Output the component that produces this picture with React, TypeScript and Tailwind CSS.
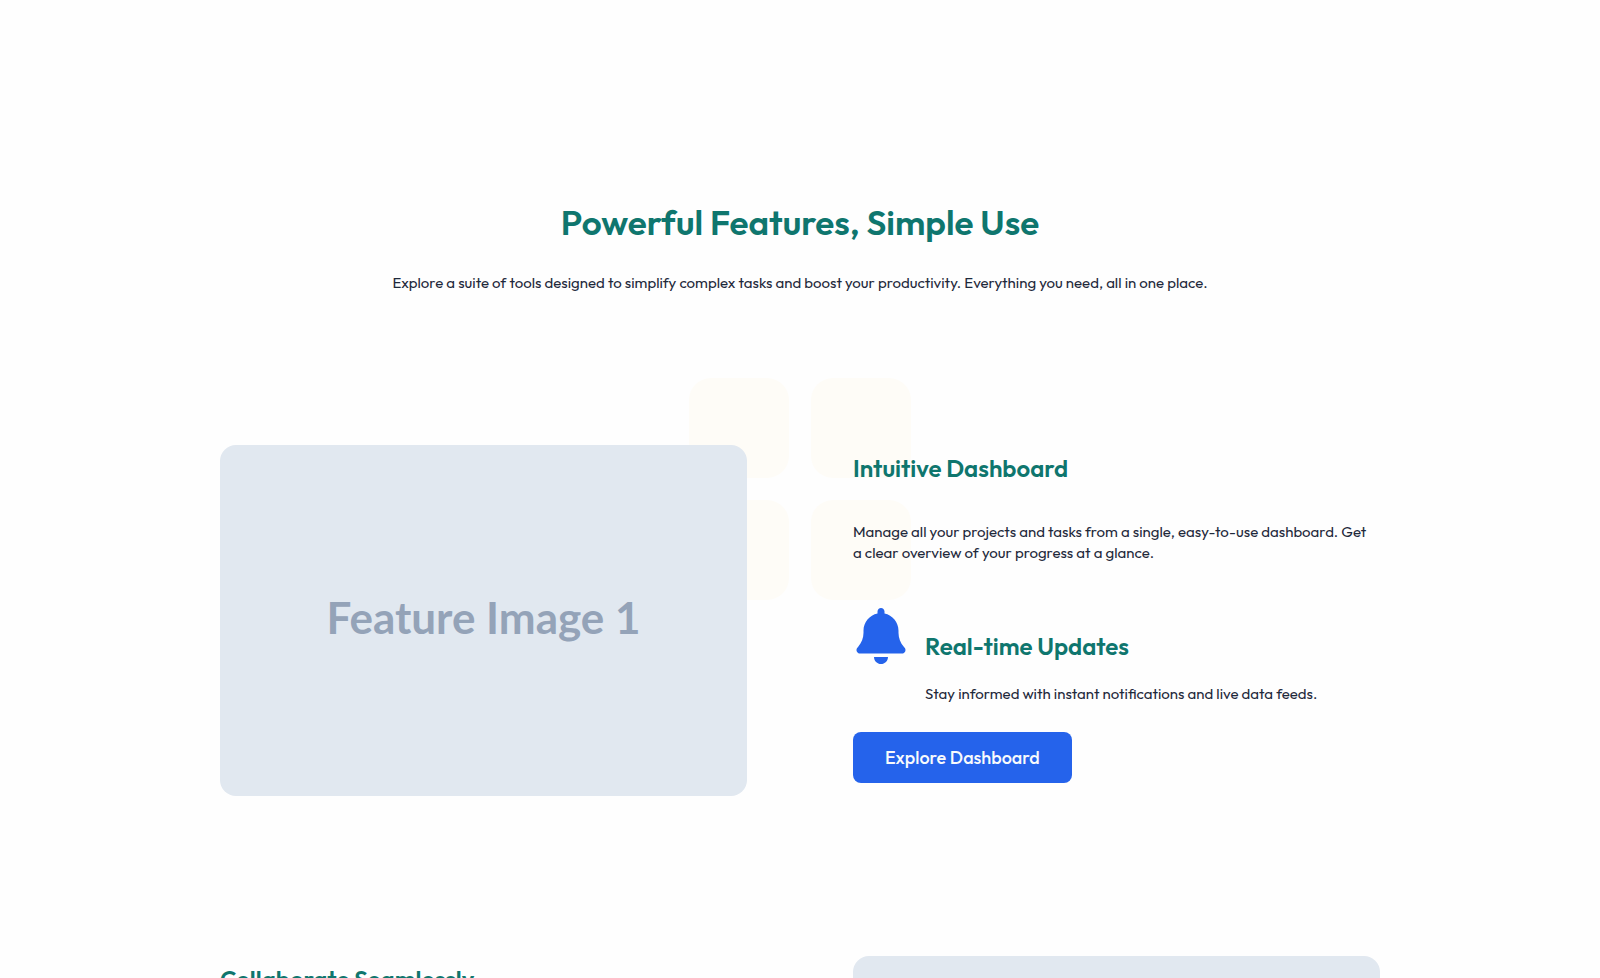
import { FaBell } from 'react-icons/fa6'

function FeatureImage({ label }: { label?: string }) {
  return (
    <div className="flex aspect-3/2 w-full items-center justify-center rounded-2xl bg-[#e1e8f0] pb-2 font-[Lato,sans-serif] text-[44px] font-bold text-[#94a3b8]">
      {label}
    </div>
  )
}

function BackgroundGrid() {
  return (
    <div aria-hidden="true" className="absolute -top-[67px] left-1/2 -z-10 grid w-[222px] -translate-x-1/2 grid-cols-2 gap-[22px]">
      {[0, 1, 2, 3].map((i) => (
        <div key={i} className="aspect-square rounded-[22px] bg-[#fefcf7]" />
      ))}
    </div>
  )
}

export default function App() {
  return (
    <main className="isolate min-h-screen bg-[#fefefe] px-6 pt-[199px] font-[Outfit,Lato,sans-serif] text-[15px] text-[#1e293b]">
      <section className="mx-auto max-w-[1160px]">
        <header className="text-center">
          <h2 className="text-[35px] leading-[46px] font-semibold text-[#0f766e]">Powerful Features, Simple Use</h2>
          <p className="mt-[27px] leading-[21px]">
            Explore a suite of tools designed to simplify complex tasks and boost your productivity. Everything you need, all in one place.
          </p>
        </header>

        <div className="relative mt-[152px] grid grid-cols-2 gap-[106px]">
          <BackgroundGrid />
          <FeatureImage label="Feature Image 1" />
          <div className="pt-[7px]">
            <h3 className="text-[24px] leading-8 font-semibold text-[#0f766e]">Intuitive Dashboard</h3>
            <p className="mt-[37px] leading-[21px]">
              Manage all your projects and tasks from a single, easy-to-use dashboard. Get a&nbsp;clear overview of your progress at a glance.
            </p>
            <div className="mt-[45px] flex gap-4">
              <FaBell className="size-14 shrink-0 text-[#2563eb]" />
              <div className="pt-[22px]">
                <h3 className="text-[24px] leading-8 font-semibold text-[#0f766e]">Real-time Updates</h3>
                <p className="mt-[21px] leading-[21px]">Stay informed with instant notifications and live data feeds.</p>
              </div>
            </div>
            <button type="button" className="mt-7 h-[51px] rounded-lg bg-[#2563eb] px-8 text-[18px] font-medium text-[#f8fafc]">
              Explore Dashboard
            </button>
          </div>
        </div>

        <div className="mt-[160px] grid grid-cols-2 gap-[106px]">
          <div className="pt-[7px]">
            <h3 className="text-[24px] leading-8 font-semibold text-[#0f766e]">Collaborate Seamlessly</h3>
          </div>
          <FeatureImage />
        </div>
      </section>
    </main>
  )
}
